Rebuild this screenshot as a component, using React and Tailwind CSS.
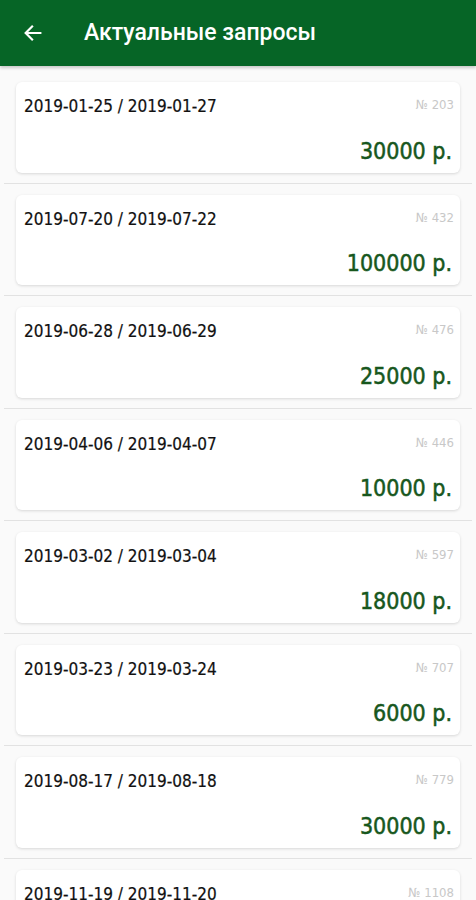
const items = [
  { from: '2019-01-25', to: '2019-01-27', num: 203, sum: 30000 },
  { from: '2019-07-20', to: '2019-07-22', num: 432, sum: 100000 },
  { from: '2019-06-28', to: '2019-06-29', num: 476, sum: 25000 },
  { from: '2019-04-06', to: '2019-04-07', num: 446, sum: 10000 },
  { from: '2019-03-02', to: '2019-03-04', num: 597, sum: 18000 },
  { from: '2019-03-23', to: '2019-03-24', num: 707, sum: 6000 },
  { from: '2019-08-17', to: '2019-08-18', num: 779, sum: 30000 },
  { from: '2019-11-19', to: '2019-11-20', num: 1108, sum: 12000 },
]

const cond = { fontFamily: '"DejaVu Sans Condensed", "Liberation Sans Narrow", "Roboto Condensed", Roboto, sans-serif' }

function RequestCard({ item }) {
  return (
    <div>
      <div className="mx-4 mt-[11px] mb-[10px] h-[90.5px] bg-white rounded-md shadow-[0_1px_3px_rgba(0,0,0,0.14)] pl-2 pr-[6px] pt-[13px] pb-[8px] flex flex-col justify-between">
        <div className="flex justify-between items-start">
          <span className="text-[17px] leading-[22px] text-[#111] [-webkit-text-stroke:0.2px_#111]" style={cond}>
            {item.from} / {item.to}
          </span>
          <span className="text-[13px] leading-[16px] text-[#c8c8c8] pt-[2px]" style={cond}>№ {item.num}</span>
        </div>
        <div className="text-right pr-[2px] text-[23px] leading-[28px] text-[#17571d] [-webkit-text-stroke:0.5px_#17571d]" style={cond}>
          {item.sum} р.
        </div>
      </div>
      <div className="mx-1 h-px bg-[#e2e2e2]" />
    </div>
  )
}

export default function App() {
  return (
    <div className="w-[476px] h-[900px] overflow-hidden bg-[#fafafa]" style={{ fontFamily: 'Roboto, sans-serif' }}>
      <div className="h-[66px] bg-[#066526] flex items-center shadow-[0_2px_3px_rgba(0,0,0,0.2)] relative z-10">
        <div className="w-[84px] pl-[22px] flex items-center">
          <svg width="22" height="22" viewBox="0 0 24 24" fill="none" stroke="white" strokeWidth="2.4" strokeLinecap="square">
            <path d="M20 12H5M11 5l-7 7 7 7" />
          </svg>
        </div>
        <h1 className="text-white text-[23px] font-medium">Актуальные запросы</h1>
      </div>
      <div className="pt-[5px]">
        {items.map((it) => (
          <RequestCard key={it.num} item={it} />
        ))}
      </div>
    </div>
  )
}
